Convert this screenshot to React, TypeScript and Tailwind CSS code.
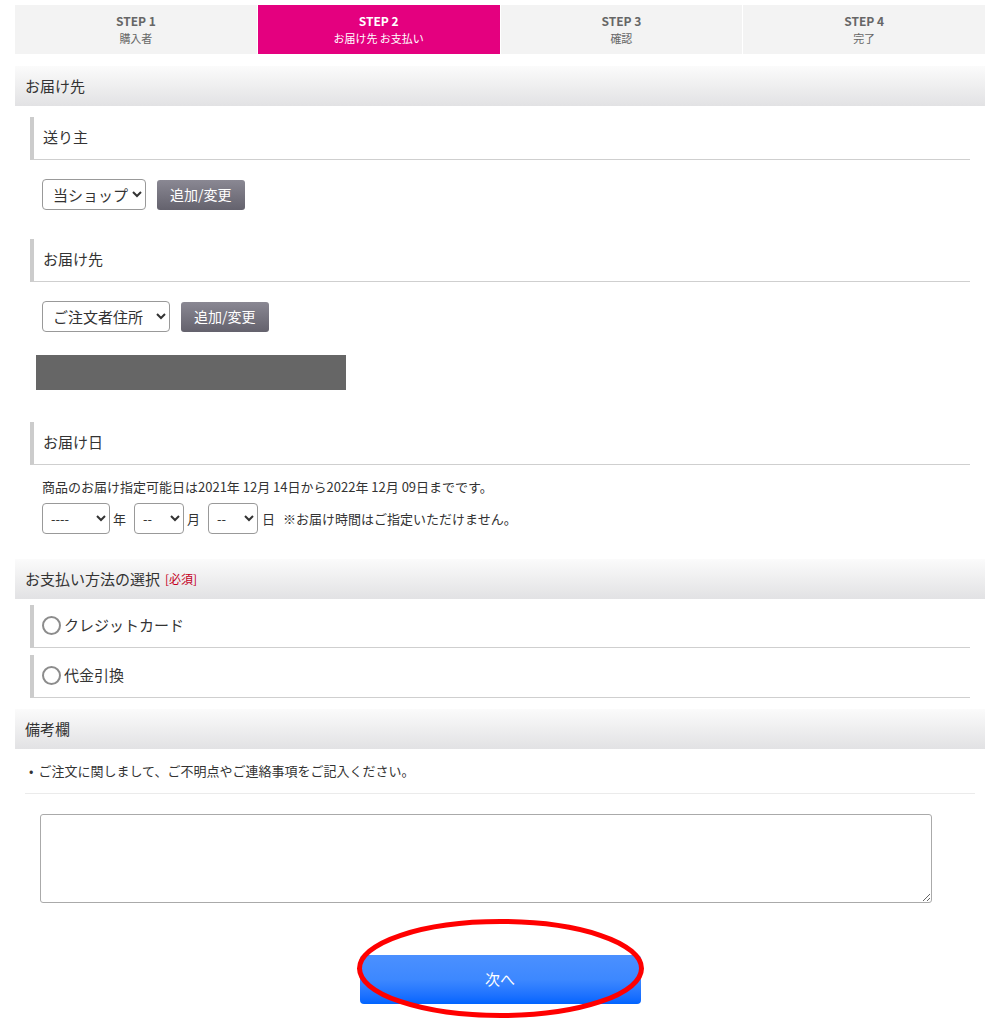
import React from 'react'

const font = { fontFamily: '"Noto Sans CJK JP", "Noto Sans", "Liberation Sans", sans-serif' }

const steps = [
  { label: 'STEP 1', sub: '購入者', active: false },
  { label: 'STEP 2', sub: 'お届け先 お支払い', active: true },
  { label: 'STEP 3', sub: '確認', active: false },
  { label: 'STEP 4', sub: '完了', active: false },
]

function SectionHeader({ children }: { children: React.ReactNode }) {
  return (
    <div className="h-[40px] bg-gradient-to-b from-[#fbfbfb] to-[#e2e2e4] flex items-center px-[10px] text-[15px] text-[#333]">
      {children}
    </div>
  )
}

function SubHeader({ title }: { title: string }) {
  return (
    <div className="mx-[15px] h-[43px] border-l-[4px] border-l-[#cccccc] border-b border-b-[#cfcfcf] flex items-center pl-[9px] pb-[2px] text-[15px] text-[#333]">
      {title}
    </div>
  )
}

function EditButton() {
  return (
    <button className="h-[30px] px-[13px] rounded-[3px] bg-gradient-to-b from-[#8a8893] to-[#64626d] text-white text-[14px]">
      追加/変更
    </button>
  )
}

function RadioRow({ label }: { label: string }) {
  return (
    <div className="mx-[15px] h-[43px] border-l-[4px] border-l-[#cccccc] border-b border-b-[#cfcfcf] flex items-center pl-[8px] pb-[2px] text-[15px] text-[#333]">
      <span className="w-[19px] h-[19px] rounded-full border-2 border-[#8c8c8c] bg-white mr-[3px]"></span>
      {label}
    </div>
  )
}

export default function App() {
  return (
    <div className="min-h-screen bg-white px-[15px] pt-[5px] pb-[18px]" style={font}>
      {/* Steps */}
      <div className="flex h-[49px]">
        {steps.map((s, i) => (
          <div
            key={s.label}
            className={`flex-1 flex flex-col items-center justify-center ${i > 0 ? 'border-l border-white' : ''} ${
              s.active ? 'bg-[#e4007f] text-white' : 'bg-[#f3f3f3] text-[#666]'
            }`}
          >
            <div className="text-[12px] font-bold leading-[18px]">{s.label}</div>
            <div className="text-[11px] leading-[16px] mb-[1px]">{s.sub}</div>
          </div>
        ))}
      </div>

      {/* お届け先 */}
      <div className="mt-[12px]">
        <SectionHeader>お届け先</SectionHeader>
      </div>

      <div className="mt-[11px]">
        <SubHeader title="送り主" />
      </div>
      <div className="mt-[19px] ml-[27px] flex items-center gap-[11px]">
        <select className="w-[104px] h-[31px] border border-[#999] rounded-[4px] bg-white text-[15px] text-[#333] pl-[6px]">
          <option>当ショップ</option>
        </select>
        <EditButton />
      </div>

      <div className="mt-[29px]">
        <SubHeader title="お届け先" />
      </div>
      <div className="mt-[19px] ml-[27px] flex items-center gap-[11px]">
        <select className="w-[128px] h-[31px] border border-[#999] rounded-[4px] bg-white text-[15px] text-[#333] pl-[6px]">
          <option>ご注文者住所</option>
        </select>
        <EditButton />
      </div>

      <div className="mt-[23px] ml-[21px] w-[310px] h-[35px] bg-[#666666]"></div>

      <div className="mt-[32px]">
        <SubHeader title="お届け日" />
      </div>
      <div className="ml-[27px] mt-[13px] text-[13px] text-[#333] leading-[18px]">
        商品のお届け指定可能日は2021年 12月 14日から2022年 12月 09日までです。
      </div>
      <div className="ml-[27px] mt-[7px] flex items-center text-[13px] text-[#333]">
        <select className="w-[68px] h-[31px] border border-[#999] rounded-[4px] bg-white text-[13px] pl-[4px]">
          <option>----</option>
        </select>
        <span className="ml-[3px] mr-[8px]">年</span>
        <select className="w-[50px] h-[31px] border border-[#999] rounded-[4px] bg-white text-[13px] pl-[4px]">
          <option>--</option>
        </select>
        <span className="ml-[3px] mr-[8px]">月</span>
        <select className="w-[50px] h-[31px] border border-[#999] rounded-[4px] bg-white text-[13px] pl-[4px]">
          <option>--</option>
        </select>
        <span className="ml-[4px]">日</span>
        <span className="ml-[8px]">※お届け時間はご指定いただけません。</span>
      </div>

      {/* お支払い方法 */}
      <div className="mt-[25px]">
        <SectionHeader>
          お支払い方法の選択
          <span className="ml-[5px] text-[12px] text-[#c4001e]">[必須]</span>
        </SectionHeader>
      </div>
      <div className="mt-[6px]">
        <RadioRow label="クレジットカード" />
      </div>
      <div className="mt-[7px]">
        <RadioRow label="代金引換" />
      </div>

      {/* 備考欄 */}
      <div className="mt-[11px]">
        <SectionHeader>備考欄</SectionHeader>
      </div>
      <div className="mx-[10px] h-[45px] border-b border-[#ebebeb] flex items-center pl-[4px] text-[13px] text-[#333]">
        <span className="mr-[5px]">•</span>
        ご注文に関しまして、ご不明点やご連絡事項をご記入ください。
      </div>
      <div className="mt-[20px] ml-[25px]">
        <textarea className="block w-[892px] h-[89px] border border-[#aaa] rounded-[3px] bg-white"></textarea>
      </div>

      {/* Next */}
      <div className="mt-[52px] flex justify-center">
        <div className="relative">
          <button className="w-[281px] h-[49px] rounded-[4px] bg-gradient-to-b from-[#4b90ff] via-[#3d88ff] to-[#0064ff] text-white text-[15px]">
            次へ
          </button>
          <svg
            className="absolute left-[-6px] top-[-37px] pointer-events-none"
            width="293"
            height="101"
            viewBox="0 0 293 101"
          >
            <ellipse cx="146.5" cy="50.5" rx="141" ry="47" fill="none" stroke="#ff0000" strokeWidth="5" />
          </svg>
        </div>
      </div>
    </div>
  )
}
